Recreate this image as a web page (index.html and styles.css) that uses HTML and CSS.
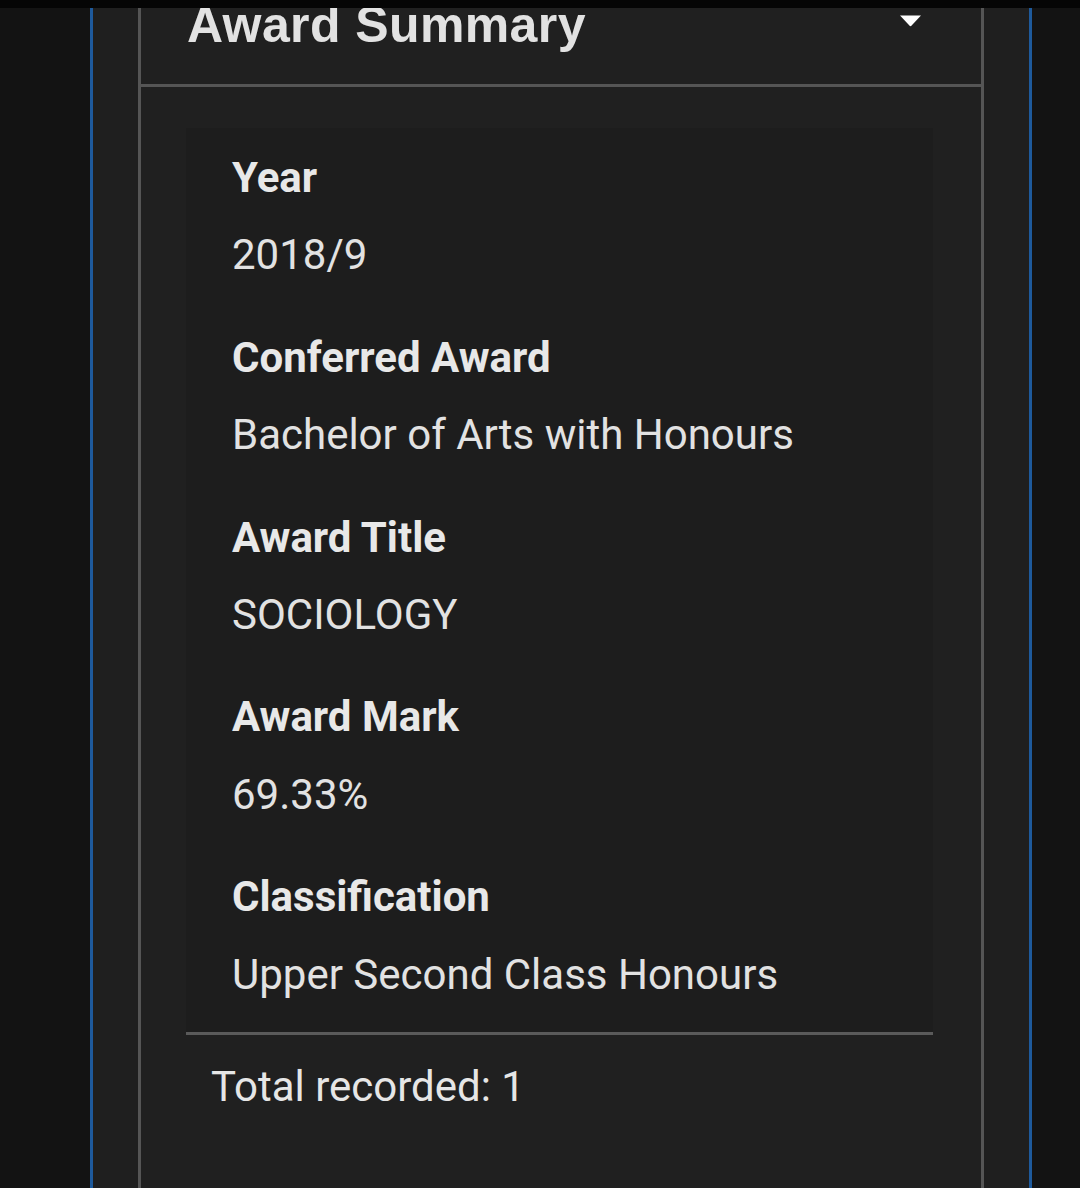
FILE: index.html
```html
<!DOCTYPE html>
<html lang="en">
<head>
<meta charset="utf-8">
<title>Award Summary</title>
<link rel="stylesheet" href="styles.css">
</head>
<body>
<div class="statusbar"></div>
<main class="column">
  <section class="panel">
    <header class="panel-head">
      <h2 class="panel-title">Award Summary</h2>
      <svg class="caret" width="23" height="13" viewBox="0 0 23 13" aria-hidden="true">
        <path d="M1 1.5 H22 L12.6 11.6 Q11.5 12.7 10.4 11.6 Z" fill="#ffffff"/>
      </svg>
    </header>
    <div class="panel-body">
      <dl class="card">
        <div class="field">
          <dt class="label">Year</dt>
          <dd class="value">2018/9</dd>
        </div>
        <div class="field">
          <dt class="label">Conferred Award</dt>
          <dd class="value">Bachelor of Arts with Honours</dd>
        </div>
        <div class="field">
          <dt class="label">Award Title</dt>
          <dd class="value">SOCIOLOGY</dd>
        </div>
        <div class="field">
          <dt class="label">Award Mark</dt>
          <dd class="value">69.33%</dd>
        </div>
        <div class="field">
          <dt class="label">Classification</dt>
          <dd class="value">Upper Second Class Honours</dd>
        </div>
      </dl>
      <p class="total">Total recorded: 1</p>
    </div>
  </section>
</main>
</body>
</html>
```

FILE: styles.css
```css
html, body {
  margin: 0;
  padding: 0;
  height: 100%;
  overflow: hidden;
}

body {
  background: #131313;
  font-family: Roboto, "Noto Sans", "Liberation Sans", sans-serif;
  color: #e4e4e4;
}

.statusbar {
  height: 8px;
  background: #050505;
}

.column {
  margin-left: 90px;
  width: 942px;
  height: 1180px;
  box-sizing: border-box;
  border-left: 3px solid #1e5a9c;
  border-right: 3px solid #1e5a9c;
  background: #1f1f1f;
  padding: 0 45px;
}

.panel {
  height: 100%;
  box-sizing: border-box;
  border-left: 3px solid #555555;
  border-right: 3px solid #555555;
  background: #202020;
}

.panel-head {
  height: 76px;
  overflow: hidden;
  display: flex;
  justify-content: space-between;
  align-items: flex-start;
  padding: 0 59px 0 46px;
  border-bottom: 3px solid #555555;
}

.panel-title {
  margin: -8px 0 0 0;
  font-family: "Liberation Sans", Arial, sans-serif;
  font-weight: 700;
  font-size: 50px;
  line-height: 50px;
  color: #e2e2e2;
  letter-spacing: 0.4px;
}

.caret {
  display: block;
  margin-top: 6px;
}

.panel-body {
  padding: 41px 48px 0 45px;
}

.card {
  margin: 0;
  padding: 25px 46px 32px;
  background: #1d1d1d;
  border-bottom: 3px solid #5a5a5a;
  display: flex;
  flex-direction: column;
  gap: 52px;
}

.field {
  display: flex;
  flex-direction: column;
  gap: 27px;
}

.label {
  margin: 0;
  font-size: 42px;
  font-weight: 700;
  line-height: 1.2;
  color: #e8e8e8;
}

.value {
  margin: 0;
  font-size: 42px;
  font-weight: 400;
  line-height: 1.2;
  color: #e2e2e2;
}

.total {
  margin: 27px 0 0 25px;
  font-size: 42px;
  line-height: 1.2;
  color: #e6e6e6;
}
```
